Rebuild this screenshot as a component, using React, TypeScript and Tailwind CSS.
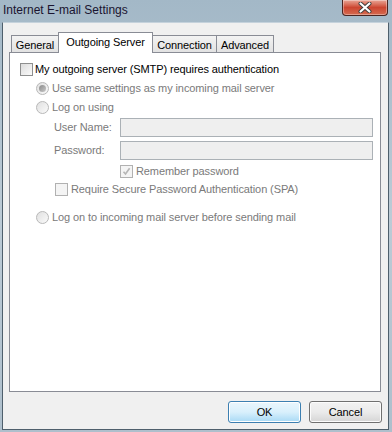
import React from "react";

function Checkbox({ checked, disabled }: { checked?: boolean; disabled?: boolean }) {
  return (
    <span
      className={
        disabled
          ? "inline-flex items-center justify-center w-[13px] h-[13px] border border-[#b1b1b1] bg-[#f4f4f4] shrink-0"
          : "inline-flex items-center justify-center w-[13px] h-[13px] border border-[#8e8f8f] bg-gradient-to-br from-[#dcdcdc] to-[#fbfbfb] shrink-0"
      }
    >
      {checked && (
        <svg width="9" height="9" viewBox="0 0 9 9">
          <path d="M1.5 4.8 L3.5 7 L7.6 1.2" fill="none" stroke={disabled ? "#b5b5b5" : "#3b4e76"} strokeWidth="1.6" />
        </svg>
      )}
    </span>
  );
}

function Radio({ checked }: { checked?: boolean }) {
  return (
    <span className="inline-flex items-center justify-center w-[13px] h-[13px] rounded-full border border-[#b8b8b8] bg-gradient-to-br from-[#e0e0e0] to-[#fafafa] shrink-0">
      {checked && <span className="w-[7px] h-[7px] rounded-full bg-gradient-to-br from-[#8a8a8a] to-[#c8c8c8]" />}
    </span>
  );
}

export default function App() {
  return (
    <div className="w-[392px] h-[432px] flex flex-col bg-gradient-to-b from-[#a3b8c7] via-[#bccbd6] to-[#aebfcc] text-[11px] leading-[13px] tracking-[-0.1px] overflow-hidden whitespace-nowrap font-['Liberation_Sans',Arial,sans-serif]">
      {/* title bar */}
      <div className="h-[22px] flex items-start shrink-0">
        <div className="pl-[3px] pt-[3px] text-[#1a1430] text-[12px] leading-[14px] tracking-normal">Internet E-mail Settings</div>
        <div className="flex-1" />
        <div className="mr-[4px] w-[46px] h-[16px] rounded-b-[4px] border border-t-0 border-[#4a2420] bg-gradient-to-b from-[#e8a596] via-[#cc4530] to-[#d46a50] shadow-[inset_0_0_0_1px_rgba(255,255,255,0.35)] flex items-center justify-center">
          <svg width="14" height="11" viewBox="0 0 14 11">
            <path d="M2.5 1.5 L11.5 9.5 M11.5 1.5 L2.5 9.5" stroke="#3c3c3c" strokeWidth="4" strokeLinecap="round" />
            <path d="M2.5 1.5 L11.5 9.5 M11.5 1.5 L2.5 9.5" stroke="#ffffff" strokeWidth="2.2" strokeLinecap="round" />
          </svg>
        </div>
      </div>

      {/* client */}
      <div className="ml-[2px] mr-[3px] mb-[2px] flex-1 border border-[#4e5f6c] border-t-[#c5d2dc] bg-[#f0f0f0] flex flex-col">
        <div className="pl-[6px] pr-[7px] pt-[9px] flex flex-col">
          {/* tabs */}
          <div className="flex items-end h-[20px] pl-[2px] relative z-10 text-black">
            <div className="w-[48px] h-[17px] border border-b-0 border-[#898c95] bg-gradient-to-b from-[#f3f3f3] to-[#e2e2e2] flex justify-center pt-[3px]">General</div>
            <div className="w-[95px] h-[21px] -mb-px -ml-px border border-b-0 border-[#898c95] bg-white flex justify-center pt-[3px]">Outgoing Server</div>
            <div className="w-[65px] h-[17px] -ml-px border border-b-0 border-[#898c95] bg-gradient-to-b from-[#f3f3f3] to-[#e2e2e2] flex justify-center pt-[3px]">Connection</div>
            <div className="w-[58px] h-[17px] -ml-px border border-b-0 border-[#898c95] bg-gradient-to-b from-[#f3f3f3] to-[#e2e2e2] flex justify-center pt-[3px]">Advanced</div>
          </div>
          {/* panel */}
          <div className="h-[340px] bg-white border border-[#898c95] pl-[10px] pt-[10px] pr-[7px] flex flex-col">
            <div className="flex items-center gap-[2px] h-[13px] text-black">
              <Checkbox />
              <span>My outgoing server (SMTP) requires authentication</span>
            </div>
            <div className="pl-[16px] flex flex-col text-[#7a7a7a]">
              <div className="flex items-center gap-[3px] h-[13px] mt-[6px]">
                <Radio checked />
                <span>Use same settings as my incoming mail server</span>
              </div>
              <div className="flex items-center gap-[3px] h-[13px] mt-[6px]">
                <Radio />
                <span>Log on using</span>
              </div>
              <div className="flex items-center mt-[4px] pl-[18px]">
                <span className="w-[66px]">User Name:</span>
                <div className="flex-1 h-[19px] border border-[#abb1b6] bg-[#efefef]" />
              </div>
              <div className="flex items-center mt-[4px] pl-[18px]">
                <span className="w-[66px]">Password:</span>
                <div className="flex-1 h-[19px] border border-[#abb1b6] bg-[#efefef]" />
              </div>
              <div className="flex items-center gap-[3px] h-[13px] mt-[5px] pl-[84px]">
                <Checkbox checked disabled />
                <span>Remember password</span>
              </div>
              <div className="flex items-center gap-[3px] h-[13px] mt-[5px] pl-[19px]">
                <Checkbox disabled />
                <span>Require Secure Password Authentication (SPA)</span>
              </div>
              <div className="flex items-center gap-[3px] h-[13px] mt-[15px]">
                <Radio />
                <span>Log on to incoming mail server before sending mail</span>
              </div>
            </div>
          </div>
        </div>
        {/* buttons */}
        <div className="flex justify-end gap-[8px] pr-[6px] mt-[9px]">
          <button className="w-[73px] h-[22px] rounded-[3px] border border-[#3c7fb1] bg-gradient-to-b from-[#eaf6fd] via-[#d9f0fc] to-[#a7d9f5] text-black shadow-[inset_0_0_0_1px_#ffffff] leading-[13px]">OK</button>
          <button className="w-[73px] h-[22px] rounded-[3px] border border-[#707070] bg-gradient-to-b from-[#f2f2f2] via-[#ebebeb] to-[#d5d5d5] text-black shadow-[inset_0_0_0_1px_#fcfcfc] leading-[13px]">Cancel</button>
        </div>
      </div>
    </div>
  );
}
